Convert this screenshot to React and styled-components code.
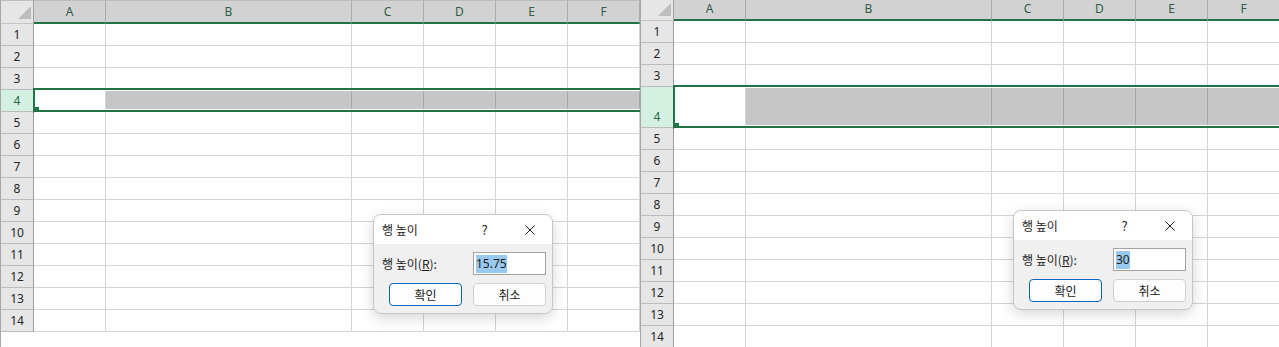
import styled, { createGlobalStyle } from "styled-components";

const GlobalStyle = createGlobalStyle`
  html, body {
    margin: 0;
    padding: 0;
    background: #fff;
  }
  body {
    font-family: "Noto Sans", "Noto Sans CJK KR", sans-serif;
  }
`;

const GREEN = "#217346";
const HEAD_W = 34;
const COLS = [
  { id: "A", w: 72 },
  { id: "B", w: 246 },
  { id: "C", w: 72 },
  { id: "D", w: 72 },
  { id: "E", w: 72 },
  { id: "F", w: 72 },
];

const Page = styled.div`
  display: flex;
  width: 1279px;
  height: 347px;
  overflow: hidden;
`;

const SheetFrame = styled.div`
  position: relative;
  flex: 0 0 ${(p) => p.$width}px;
  height: 347px;
  overflow: hidden;
  background: #fff;
  box-shadow: inset 1px 0 0 #a8a8a8;
`;

const HeaderRow = styled.div`
  display: flex;
  height: 24px;
  margin-top: ${(p) => -p.$crop}px;
`;

const Corner = styled.div`
  flex: 0 0 ${HEAD_W}px;
  box-sizing: border-box;
  display: flex;
  align-items: flex-end;
  justify-content: flex-end;
  padding: 0 2px 4px 0;
  background: #e6e6e6;
  border-top: 1px solid #bdbdbd;
  border-left: 1px solid #a8a8a8;
  border-right: 1px solid #a0a0a0;
  border-bottom: 1px solid #c4c4c4;
`;

const ColHead = styled.div`
  flex: 0 0 ${(p) => p.$w}px;
  box-sizing: border-box;
  display: flex;
  align-items: center;
  justify-content: center;
  background: #d2d2d2;
  border-top: 1px solid #bdbdbd;
  border-right: 1px solid #ababab;
  border-bottom: 2px solid ${GREEN};
  color: #2d5e46;
  font-size: 12px;
`;

const Row = styled.div`
  display: flex;
  height: ${(p) => p.$h}px;
`;

const RowHead = styled.div`
  flex: 0 0 ${HEAD_W}px;
  box-sizing: border-box;
  display: flex;
  align-items: flex-end;
  justify-content: center;
  padding-bottom: 2px;
  line-height: 16px;
  font-size: 12px;
  color: ${(p) => (p.$sel ? "#2d6a4a" : "#262626")};
  background: ${(p) => (p.$sel ? "#d3f0e0" : "#e6e6e6")};
  border-left: 1px solid #a8a8a8;
  border-right: 1px solid #9e9e9e;
  border-bottom: 1px solid #bcbcbc;
`;

const Cells = styled.div`
  position: relative;
  display: flex;
`;

const Cell = styled.div`
  flex: 0 0 ${(p) => p.$w}px;
  box-sizing: border-box;
  background: ${(p) => (p.$fill ? "#c6c6c6" : "#fff")};
  border-right: 1px solid ${(p) => (p.$fill ? "#a6a6a6" : "#d4d4d4")};
  border-bottom: 1px solid #d4d4d4;
`;

const Selection = styled.div`
  position: absolute;
  top: -2px;
  left: -1px;
  right: 0;
  bottom: 0;
  border: 2px solid ${GREEN};
  border-right: 0;
  box-shadow: inset 0 1px 0 #fff, inset 0 -1px 0 #fff;
  pointer-events: none;
`;

const Handle = styled.div`
  position: absolute;
  left: -1px;
  bottom: -1px;
  width: 6px;
  height: 6px;
  background: ${GREEN};
`;

const Dialog = styled.div`
  position: absolute;
  left: 373px;
  top: ${(p) => p.$top}px;
  width: 180px;
  box-sizing: border-box;
  border: 1px solid #c6c6c6;
  border-radius: 8px;
  background: #f0f0f0;
  box-shadow: 0 4px 14px rgba(0, 0, 0, 0.16);
  overflow: hidden;
  font-family: "Noto Sans CJK KR", "Noto Sans", sans-serif;
  font-size: 12px;
  line-height: 16px;
  color: #1b1b1b;
`;

const TitleBar = styled.div`
  display: flex;
  align-items: center;
  height: 29px;
  background: #fff;
  padding-left: 8px;
`;

const Title = styled.div`
  flex: 1;
`;

const TitleButton = styled.div`
  flex: 0 0 45px;
  height: 29px;
  display: flex;
  align-items: center;
  justify-content: center;
  font-size: 13px;
`;

const Body = styled.div`
  padding: 8px 6px 7px 8px;
`;

const FieldRow = styled.div`
  display: flex;
  align-items: center;
  justify-content: space-between;
  height: 23px;
`;

const Input = styled.div`
  width: 73px;
  height: 23px;
  box-sizing: border-box;
  display: flex;
  align-items: center;
  padding-left: 2px;
  background: #fff;
  border: 1px solid #a2a2a2;
  font-family: "Noto Sans", sans-serif;
`;

const Selected = styled.span`
  background: #99c9ef;
  line-height: 18px;
`;

const ButtonRow = styled.div`
  display: flex;
  justify-content: flex-end;
  gap: 11px;
  margin-top: 8px;
`;

const Button = styled.div`
  width: 73px;
  height: 23px;
  box-sizing: border-box;
  display: flex;
  align-items: center;
  justify-content: center;
  background: #fdfdfd;
  border: 1px solid ${(p) => (p.$primary ? "#0067c0" : "#d0d0d0")};
  border-radius: 4px;
`;

function CloseIcon() {
  return (
    <svg width="10" height="10" viewBox="0 0 10 10">
      <path d="M0.5 0.5 L9.5 9.5 M9.5 0.5 L0.5 9.5" stroke="#1b1b1b" strokeWidth="1" />
    </svg>
  );
}

function RowHeightDialog({ top, value }) {
  return (
    <Dialog $top={top}>
      <TitleBar>
        <Title>행 높이</Title>
        <TitleButton>?</TitleButton>
        <TitleButton>
          <CloseIcon />
        </TitleButton>
      </TitleBar>
      <Body>
        <FieldRow>
          <span>
            행 높이(<u>R</u>):
          </span>
          <Input>
            <Selected>{value}</Selected>
          </Input>
        </FieldRow>
        <ButtonRow>
          <Button $primary>확인</Button>
          <Button>취소</Button>
        </ButtonRow>
      </Body>
    </Dialog>
  );
}

function Sheet({ width, crop, selHeight, dialogTop, value }) {
  const rows = Array.from({ length: 14 }, (_, i) => i + 1);
  return (
    <SheetFrame $width={width}>
      <HeaderRow $crop={crop}>
        <Corner>
          <svg width="13" height="13" viewBox="0 0 13 13">
            <polygon points="13,0 13,13 0,13" fill="#bdbdbd" />
          </svg>
        </Corner>
        {COLS.map((c) => (
          <ColHead key={c.id} $w={c.w}>
            {c.id}
          </ColHead>
        ))}
      </HeaderRow>
      {rows.map((n) => {
        const sel = n === 4;
        return (
          <Row key={n} $h={sel ? selHeight : 22}>
            <RowHead $sel={sel}>{n}</RowHead>
            <Cells>
              {COLS.map((c, i) => (
                <Cell key={c.id} $w={c.w} $fill={sel && i > 0} />
              ))}
              {sel && <Selection />}
              {sel && <Handle />}
            </Cells>
          </Row>
        );
      })}
      <RowHeightDialog top={dialogTop} value={value} />
    </SheetFrame>
  );
}

export default function App() {
  return (
    <>
      <GlobalStyle />
      <Page>
        <Sheet width={640} crop={0} selHeight={22} dialogTop={214} value="15.75" />
        <Sheet width={639} crop={3} selHeight={41} dialogTop={210} value="30" />
      </Page>
    </>
  );
}
